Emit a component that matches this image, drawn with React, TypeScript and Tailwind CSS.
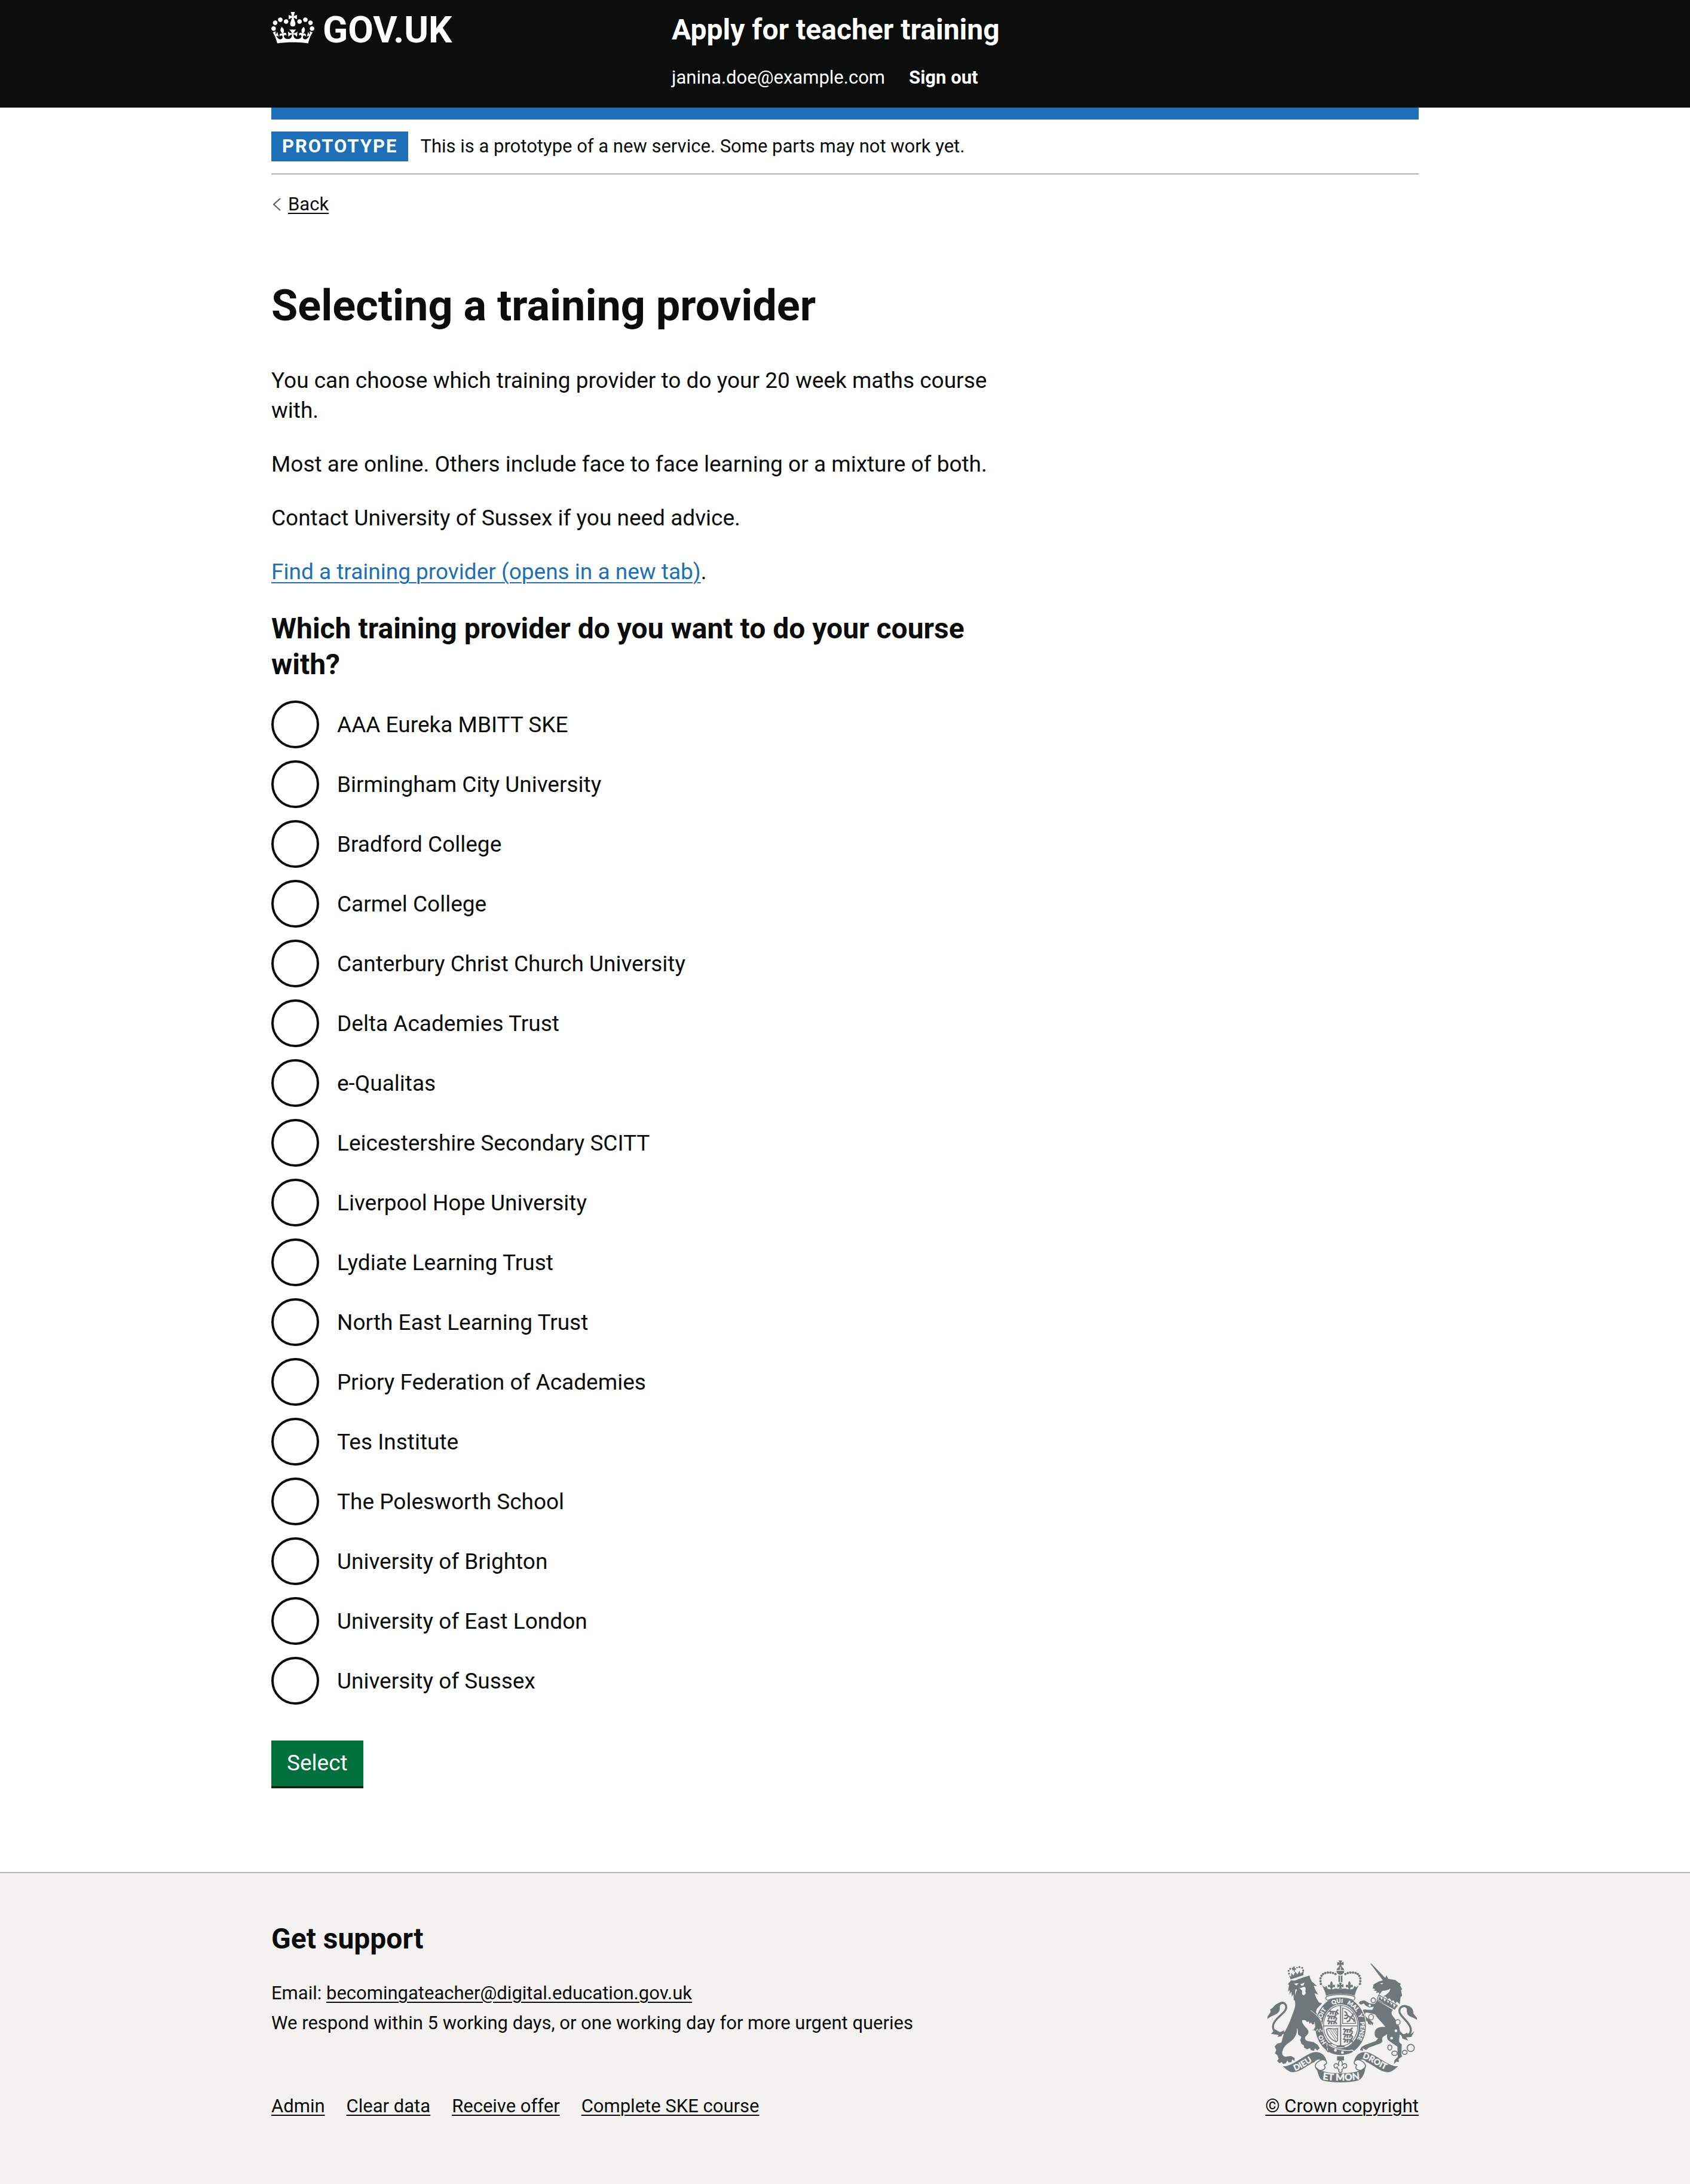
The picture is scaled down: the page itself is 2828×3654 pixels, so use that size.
import React from "react";

const providers = [
  "AAA Eureka MBITT SKE",
  "Birmingham City University",
  "Bradford College",
  "Carmel College",
  "Canterbury Christ Church University",
  "Delta Academies Trust",
  "e-Qualitas",
  "Leicestershire Secondary SCITT",
  "Liverpool Hope University",
  "Lydiate Learning Trust",
  "North East Learning Trust",
  "Priory Federation of Academies",
  "Tes Institute",
  "The Polesworth School",
  "University of Brighton",
  "University of East London",
  "University of Sussex",
];

const footerLinks = ["Admin", "Clear data", "Receive offer", "Complete SKE course"];

const linkBase = "underline decoration-2 underline-offset-4";

function CrownLogo() {
  return (
    <svg aria-hidden="true" viewBox="0 0 132 97" className="h-[53px] w-[72px] fill-current">
      <path
        fillRule="evenodd"
        d="M25 30.2c3.5 1.5 7.7-.2 9.1-3.7 1.5-3.6-.2-7.8-3.9-9.2-3.6-1.4-7.6.3-9.1 3.9-1.4 3.5.3 7.5 3.9 9zM9 39.5c3.6 1.5 7.8-.2 9.2-3.7 1.5-3.6-.2-7.8-3.9-9.1-3.6-1.5-7.6.2-9.1 3.8-1.4 3.5.3 7.5 3.8 9zM4.4 57.2c3.5 1.5 7.7-.2 9.1-3.8 1.5-3.6-.2-7.7-3.9-9.1-3.5-1.5-7.6.3-9.1 3.8-1.4 3.5.3 7.6 3.9 9.1zm38.3-21.4c3.5 1.5 7.7-.2 9.1-3.8 1.5-3.6-.2-7.7-3.9-9.1-3.6-1.5-7.6.3-9.1 3.8-1.3 3.6.4 7.7 3.9 9.1zm64.4-5.6c-3.6 1.5-7.8-.2-9.1-3.7-1.5-3.6.2-7.8 3.8-9.2 3.6-1.4 7.7.3 9.2 3.9 1.3 3.5-.4 7.5-3.9 9zm15.9 9.3c-3.6 1.5-7.7-.2-9.1-3.7-1.5-3.6.2-7.8 3.7-9.1 3.6-1.5 7.7.2 9.2 3.8 1.5 3.5-.3 7.5-3.8 9zm4.7 17.7c-3.6 1.5-7.8-.2-9.2-3.8-1.5-3.6.2-7.7 3.9-9.1 3.6-1.5 7.7.3 9.2 3.8 1.3 3.5-.4 7.6-3.9 9.1zM89.3 35.8c-3.6 1.5-7.8-.2-9.2-3.8-1.4-3.6.2-7.7 3.9-9.1 3.6-1.5 7.7.3 9.2 3.8 1.4 3.6-.3 7.7-3.9 9.1zM69.7 17.7l8.9 4.7V9.3l-8.9 2.8c-.2-.3-.5-.6-.9-.9L72.4 0H59.6l3.5 11.2c-.3.3-.6.5-.9.9l-8.8-2.8v13.1l8.8-4.7c.3.3.6.7.9.9l-5 15.4v.1c-.2.8-.4 1.6-.4 2.4 0 4.1 3.1 7.5 7 8.1h.2c.3 0 .7.1 1 .1.4 0 .7 0 1-.1h.2c4-.6 7.1-4.1 7.1-8.1 0-.8-.1-1.7-.4-2.4V34l-5.1-15.4c.4-.2.7-.6 1-.9zM66 92.8c16.9 0 32.8 1.1 47.1 3.2 4-16.9 8.9-26.7 14-33.5l-9.6-3.4c1 4.9 1.1 7.2 0 10.2-1.5-1.4-3-4.3-4.2-8.7L108.6 76c2.8-2 5-3.2 7.5-3.3-4.4 9.4-10 11.9-13.6 11.2-4.3-.8-6.3-4.6-5.6-7.9 1-4.7 5.7-5.9 8-.5 4.3-8.7-3-11.4-7.6-8.8 7.1-7.2 7.9-13.5 2.1-21.1-8 6.1-8.1 12.3-4.5 20.8-4.7-5.4-12.1-2.5-9.5 6.2 3.4-5.2 7.9-2 7.2 3.1-.6 4.3-6.4 7.8-13.5 7.2-10.3-.9-10.9-8-11.2-13.8 2.5-.5 7.1 1.8 11 7.3L80.2 60c-4.1 4.4-8 5.3-12.3 5.4 1.4-4.4 8-11.6 8-11.6H55.5s6.4 7.2 7.9 11.6c-4.2-.1-8-1-12.3-5.4l1.4 16.4c3.9-5.5 8.5-7.7 10.9-7.3-.3 5.8-.9 12.8-11.1 13.8-7.2.6-12.9-2.9-13.5-7.2-.7-5 3.8-8.3 7.1-3.1 2.7-8.7-4.6-11.6-9.4-6.2 3.7-8.5 3.6-14.7-4.6-20.8-5.8 7.6-5 13.9 2.2 21.1-4.7-2.6-11.9.1-7.7 8.8 2.3-5.5 7.1-4.2 8.1.5.7 3.3-1.3 7.1-5.7 7.9-3.5.7-9-1.8-13.5-11.2 2.5.1 4.7 1.3 7.5 3.3l-4.7-15.4c-1.2 4.4-2.7 7.2-4.3 8.7-1.1-3-.9-5.3 0-10.2l-9.5 3.4c5 6.9 9.9 16.7 14 33.5 14.8-2.1 30.8-3.2 47.7-3.2z"
      />
    </svg>
  );
}

const INK = "#6f777a";
const PAPER = "#f3f2f1";

const beads: [number, number][] = [
  [382, 208], [380, 194], [380, 180], [385, 167], [393, 158], [404, 153], [417, 151], [430, 151], [443, 153], [455, 158],
];

// Words round the garter, each with its distance along the ellipse.
const garterWords: [string, number][] = [
  ["HO", 82],
  ["SOIT", 194],
  ["QUI", 298],
  ["MAL", 373],
  ["Y", 452],
  ["PENSE", 490],
];

function FleurDeLis({ x, y, s }: { x: number; y: number; s: number }) {
  return (
    <path
      transform={`translate(${x} ${y}) scale(${s})`}
      d="M0-24C8-14 9-6 4 4 8-4 18-6 20 4 21 12 12 15 10 9 8 12 7 16 4 18L6 26H-6L-4 18C-7 16-8 12-10 9-12 15-21 12-20 4-18-6-8-4-4 4-9-6-8-14 0-24Z"
    />
  );
}

function CrossPatty({ x, y, s }: { x: number; y: number; s: number }) {
  return (
    <path
      transform={`translate(${x} ${y}) scale(${s})`}
      d="M-9-16H9L3-4 16-9V9L3 4 9 16H-9L-3 4-16 9V-9L-3-4Z"
    />
  );
}

function PassantLion({ x, y }: { x: number; y: number }) {
  return (
    <path
      transform={`translate(${x} ${y})`}
      fill="none"
      strokeWidth="7"
      d="M0 2 5-3 10 1 8 5M8 3C18 0 26 0 38 3L42-5 48-7M12 4 8 13 3 13M20 4 22 13 17 14M36 4 34 13 29 13M40 4 46 12 42 14"
    />
  );
}

function RibbonHalf() {
  return (
    <g>
      <path d="M190 621C236 624 288 572 334 554C372 541 404 558 412 600C404 594 394 590 384 591C371 583 358 590 350 600C318 612 282 650 242 651C220 650 206 634 190 621Z" />
      <path
        d="M389 588C359 598 348 616 357 630C363 639 371 643 379 642C402 641 408 628 398 616C402 612 412 612 411 601C407 592 398 588 389 588Z"
        fill={PAPER}
        stroke={INK}
        strokeWidth="5"
      />
    </g>
  );
}

function RoyalArms() {
  return (
    <svg aria-hidden="true" viewBox="114 90 750 612" className="h-[204px] w-[250px]" fill={INK}>
      {/* Lion */}
      <path d="M232 190 250 191 296 174 325 166 329 181 336 195 363 219 346 217 354 238 369 262 350 254 358 277 372 300 388 305 362 332 357 350 372 370 384 398 393 430 388 446 378 432 375 448 364 432 356 446 340 440 352 424 350 408 340 412 332 401 324 408 322 396 311 399 C308 388 300 388 288 390 C284 400 298 418 310 430 C325 446 322 458 305 472 C298 484 306 494 322 496 L346 500 366 514 376 530 364 542 352 530 348 543 332 541 328 530 312 536 298 528 296 516 284 508 278 490 284 474 268 462 C266 450 268 438 262 430 C264 462 248 484 226 500 C206 512 196 524 190 542 C184 556 190 572 206 573 L232 569 250 580 250 596 238 586 234 600 220 602 214 592 206 606 192 610 186 600 174 606 162 594 170 584 164 566 151 556 158 540 150 522 162 508 184 502 C190 480 192 462 206 438 C222 412 230 384 242 354 C254 324 256 308 250 288 L246 292 244 258 236 272 234 246 224 262 226 238 217 246 222 214 217 208Z" />
      <g fill={PAPER}>
        <path d="M246 206 270 204 260 216ZM278 210 300 201 294 216 284 217Z" />
        <path d="M272 226C282 234 296 216 304 226C308 236 302 240 306 252C304 262 296 268 290 262C284 256 290 246 286 240Z" />
        <path d="M254 234 262 236 252 266Z" />
      </g>
      <circle cx="222" cy="156" r="5" />
      <circle cx="220" cy="142" r="5" />
      <circle cx="228" cy="132" r="5" />
      <circle cx="240" cy="130" r="4" />
      <circle cx="262" cy="126" r="4" />
      <circle cx="274" cy="123" r="5" />
      <circle cx="288" cy="127" r="5" />
      <circle cx="293" cy="140" r="5" />
      <path d="M222 164 232 172 234 152 244 166 254 146 264 160 274 142 280 156 296 142 294 164 230 185Z" />
      <path d="M241 122 252 120 249 130 256 128 257 138 250 136 252 146 246 146 246 137 240 140 238 131 244 131Z" />
      <path
        d="M206 452C166 462 134 446 143 412C152 374 210 356 208 322C206 304 190 298 176 306"
        fill="none"
        stroke={INK}
        strokeWidth="10"
      />
      <path d="M204 302C188 292 156 304 140 328L127 336 130 348 114 372V384C132 366 160 366 172 346C180 332 170 318 184 310Z" />
      <path d="M132 458 152 436 176 450 200 440 184 470 164 474 170 464Z" />

      {/* Unicorn */}
      <path d="M630 105 636 106 711 184 696 194Z" />
      <path d="M642 230 647 210 672 196 698 188 712 164 720 182 756 188 770 200 783 206 780 216 790 234 784 240 790 268 782 274 778 310 764 296 756 306 746 290 736 294 728 280 716 284 708 272 694 270 C712 262 732 246 730 230 C722 238 704 242 690 242 L676 262 672 250 660 254 662 244 646 240 656 234Z" />
      <path d="M678 206 694 202 690 210Z" fill={PAPER} />
      <path d="M672 263 766 316 752 334 664 288Z" fill={PAPER} stroke={INK} strokeWidth="4" />
      <path d="M670 286 678 268 686 288 694 276 702 296 711 284 718 304 728 292 734 314 744 302 748 330 756 314 764 318 750 336Z" />
      <path d="M664 290 744 338C730 352 738 366 752 380C764 398 776 416 778 440C780 470 772 480 776 500L788 512 786 560 790 572 772 584 774 600 762 598 748 610 752 590 768 574 766 522C750 512 736 502 722 492C712 484 714 470 714 460C704 470 688 470 690 486C694 502 680 508 664 512L622 528 608 540 592 530 594 544 578 540 586 524 604 514 658 494 670 480C652 478 650 460 653 446C660 424 684 422 706 424C694 404 668 386 656 362C638 356 616 352 608 352C598 360 606 376 626 386L646 404 640 416 632 402 634 414 620 408 616 396C604 394 588 374 584 346L598 336 640 338 648 322C630 328 606 322 598 306L582 312 572 304 580 294 600 290 628 306 652 308Z" />
      <path
        d="M774 452C804 478 838 466 833 432C828 396 776 372 776 344C776 322 796 314 816 322"
        fill="none"
        stroke={INK}
        strokeWidth="10"
      />
      <path d="M800 319C830 312 848 332 846 356L864 378V388C842 370 818 376 814 350C812 340 816 332 808 328Z" />
      <path d="M776 440 796 462 816 452 818 468 838 456 852 444 836 474 810 476 820 492 792 482Z" />
      <g fill="none" stroke={INK} strokeWidth="5">
        <ellipse cx="645" cy="290" rx="11" ry="12" />
        <ellipse cx="728" cy="527" rx="10" ry="13" />
        <ellipse cx="752" cy="556" rx="14" ry="11" />
        <ellipse cx="803" cy="551" rx="12" ry="10" />
        <circle cx="833" cy="529" r="18" />
      </g>
      <g fill={PAPER} stroke={INK} strokeWidth="4">
        <circle cx="627" cy="316" r="8" />
        <ellipse cx="634" cy="374" rx="12" ry="14" />
        <ellipse cx="768" cy="400" rx="12" ry="13" />
        <circle cx="759" cy="443" r="9" />
        <circle cx="737" cy="480" r="9" />
      </g>

      {/* Crown */}
      <CrossPatty x={480} y={106} s={1} />
      <path d="M461 138C463 126 472 122 478 122V138ZM482 122C490 122 497 128 499 138H482ZM460 142H500C500 154 490 162 480 162S460 154 460 142Z" />
      <path d="M470 166H478V198H470ZM482 166H490V198H482Z" />
      {beads.map(([x, y]) => (
        <g key={`${x}-${y}`}>
          <circle cx={x} cy={y} r="6" />
          <circle cx={960 - x} cy={y} r="6" />
        </g>
      ))}
      <FleurDeLis x={435} y={214} s={0.9} />
      <FleurDeLis x={525} y={214} s={0.9} />
      <CrossPatty x={480} y={217} s={0.95} />
      <path d="M388 214 400 224 410 218 416 232 435 236 456 230 480 234 504 230 525 236 544 232 550 218 560 224 572 214C564 234 556 246 552 266C510 254 450 254 408 266C404 246 396 234 388 214Z" />

      {/* Garter */}
      <ellipse cx="481" cy="420" rx="131" ry="152" fill={PAPER} />
      <ellipse cx="481" cy="420" rx="109" ry="128" fill="none" stroke={INK} strokeWidth="36" />
      <path
        d="M410 270C450 258 510 258 550 270C556 278 552 288 544 290C510 274 450 274 416 290C408 288 404 278 410 270Z"
        fill={PAPER}
        stroke={INK}
        strokeWidth="4"
      />

      {/* Shield */}
      <ellipse cx="481" cy="418" rx="86" ry="102" fill={PAPER} stroke={INK} strokeWidth="4" />
      <path d="M478 316H484V520H478ZM395 416H567V421H395Z" />
      <g stroke={INK}>
        <PassantLion x={422} y={345} />
        <PassantLion x={414} y={369} />
        <PassantLion x={414} y={394} />
        <PassantLion x={494} y={436} />
        <PassantLion x={494} y={461} />
        <PassantLion x={494} y={486} />
      </g>
      <path d="M491 328C525 334 553 364 556 406H491Z" fill="none" stroke={INK} strokeWidth="4" />
      <path
        d="M500 346 510 352 514 364 530 376 542 366 544 356M514 364 500 366M520 370 510 382 498 380M530 376 526 392 512 398M534 378 546 386 550 398"
        fill="none"
        stroke={INK}
        strokeWidth="7"
      />
      <path
        d="M410 436C424 424 440 440 466 432V490C462 500 456 500 452 494C430 486 412 462 410 436Z"
        fill="none"
        stroke={INK}
        strokeWidth="5"
      />
      <path d="M420 438 458 494M430 436 462 484M442 437 464 468M452 438 464 454" stroke={INK} strokeWidth="3" />
      <path d="M466 516H496L504 526H458Z" />

      {/* Buckle and strap */}
      <path d="M412 506C440 528 480 548 540 540L548 548C510 574 450 572 416 548Z" stroke={PAPER} strokeWidth="4" />
      <path d="M438 510C420 500 414 512 418 522C406 528 408 544 422 550" fill="none" stroke={INK} strokeWidth="5" />
      <circle cx="455" cy="541" r="7" fill={PAPER} />
      <circle cx="490" cy="552" r="7" fill={PAPER} />

      {/* Garter lettering */}
      <path id="garter" d="M481 537A100 117 0 0 1 481 303A100 117 0 0 1 481 537" fill="none" />
      <g fill={PAPER} stroke={PAPER} strokeWidth="1" fontFamily="Lato, sans-serif" fontWeight="900" fontSize="29">
        {garterWords.map(([word, offset]) => (
          <text key={word}>
            <textPath href="#garter" startOffset={offset}>
              {word}
            </textPath>
          </text>
        ))}
      </g>

      {/* Forepaws resting on the garter */}
      <path
        d="M330 340C350 356 374 372 384 398L394 432 388 448 378 432 374 450 364 434 356 446 344 440 352 424 350 400"
        stroke={PAPER}
        strokeWidth="3"
      />

      {/* Motto ribbon */}
      <RibbonHalf />
      <g transform="translate(960 0) scale(-1 1)">
        <RibbonHalf />
      </g>
      <path d="M354 618C366 640 400 656 480 656S594 640 606 618C604 656 592 682 570 692C520 705 440 705 390 692C368 682 370 650 354 618Z" />
      <path d="M463 571H498V592H463Z" />
      <path
        d="M480 588C494 602 490 612 487 620C492 606 510 602 512 618C512 630 500 634 496 626C494 634 492 636 487 638C492 646 486 652 480 652S468 646 473 638C468 636 466 634 464 626C460 634 448 630 448 618C450 602 468 606 473 620C470 612 466 602 480 588Z"
        fill={PAPER}
        stroke={INK}
        strokeWidth="5"
      />
      <path id="motto-left" d="M252 644C292 632 326 600 366 582" fill="none" />
      <path id="motto-centre" d="M390 687C440 695 520 695 576 687" fill="none" />
      <path id="motto-right" d="M589 580C630 588 670 630 730 646" fill="none" />
      <g fill={PAPER} stroke={PAPER} strokeWidth="1" fontFamily="Lato, sans-serif" fontWeight="900" fontSize="42">
        <text>
          <textPath href="#motto-left">DIEU</textPath>
        </text>
        <text fontSize="48">
          <textPath href="#motto-centre">ET MON</textPath>
        </text>
        <text>
          <textPath href="#motto-right">DROIT</textPath>
        </text>
      </g>
    </svg>
  );
}

export default function App() {
  const [selected, setSelected] = React.useState<string | null>(null);

  return (
    <div className="bg-white font-['Roboto',sans-serif] text-[37px] leading-[50px] text-[#0b0c0c]">
      <header className="bg-[#0b0c0c] text-white">
        <div className="mx-auto flex max-w-[1920px] items-start pt-5 pb-[30px]">
          <div className="w-[670px] shrink-0">
            <a href="#" className="inline-flex items-start gap-3.5 text-[62px] leading-[60px] font-bold">
              <CrownLogo />
              <span>GOV.UK</span>
            </a>
          </div>
          <div className="flex flex-col gap-[30px]">
            <a href="#" className="text-5xl leading-[60px] font-bold">
              Apply for teacher training
            </a>
            <nav className="flex gap-10 text-[31px] leading-10">
              <span>janina.doe@example.com</span>
              <a href="#" className="font-bold">
                Sign out
              </a>
            </nav>
          </div>
        </div>
      </header>

      <div className="mx-auto max-w-[1920px]">
        <div className="h-5 bg-[#1d70b8]" />
        <div className="flex items-center gap-5 border-b-2 border-[#b1b4b6] py-5 text-[31px] leading-[50px]">
          <strong className="bg-[#1d70b8] px-[18px] tracking-[2px] text-white">PROTOTYPE</strong>
          <span>This is a prototype of a new service. Some parts may not work yet.</span>
        </div>

        <a href="#" className="mt-[30px] flex w-fit items-center gap-3 text-[31px] leading-10">
          <svg aria-hidden="true" viewBox="0 0 16 24" className="h-6 w-4" fill="none" stroke="#505a5f" strokeWidth="2">
            <path d="M15 2 4 12 15 22" />
          </svg>
          <span className={linkBase}>Back</span>
        </a>

        <main className="w-[1240px] max-w-full pt-[110px] pb-[140px]">
          <h1 className="mb-[60px] text-7xl leading-[80px] font-bold">Selecting a training provider</h1>
          <p className="mb-10">You can choose which training provider to do your 20 week maths course with.</p>
          <p className="mb-10">Most are online. Others include face to face learning or a mixture of both.</p>
          <p className="mb-10">Contact University of Sussex if you need advice.</p>
          <p className="mb-10">
            <a href="#" className="text-[#1d70b8] underline decoration-2 underline-offset-[5px]">
              Find a training provider (opens in a new tab)
            </a>
            .
          </p>

          <form onSubmit={(e) => e.preventDefault()}>
            <fieldset>
              <legend className="mb-[30px] text-5xl leading-[60px] font-bold">
                Which training provider do you want to do your course with?
              </legend>
              <div className="flex flex-col gap-5">
                {providers.map((name, i) => (
                  <div key={name} className="flex items-start gap-[30px]">
                    <input
                      type="radio"
                      id={`provider-${i}`}
                      name="provider"
                      value={name}
                      checked={selected === name}
                      onChange={() => setSelected(name)}
                      className="size-20 shrink-0 appearance-none rounded-full border-4 border-[#0b0c0c] bg-white checked:bg-[#0b0c0c] checked:shadow-[inset_0_0_0_14px_white]"
                    />
                    <label htmlFor={`provider-${i}`} className="pt-4">
                      {name}
                    </label>
                  </div>
                ))}
              </div>
            </fieldset>
            <button
              type="submit"
              className="mt-[60px] mb-1 block bg-[#00703c] px-[26px] py-[13px] text-white shadow-[0_4px_0_#002d18]"
            >
              Select
            </button>
          </form>
        </main>
      </div>

      <footer className="border-t-2 border-[#b1b4b6] bg-[#f3f2f1] text-[31px]">
        <div className="mx-auto flex max-w-[1920px] items-end justify-between pt-20 pb-[110px]">
          <div>
            <h2 className="mb-9 text-5xl leading-[60px] font-bold">Get support</h2>
            <ul className="mb-[94px]">
              <li>
                Email:{" "}
                <a href="#" className={linkBase}>
                  becomingateacher@digital.education.gov.uk
                </a>
              </li>
              <li>We respond within 5 working days, or one working day for more urgent queries</li>
            </ul>
            <ul className="flex gap-9 leading-10">
              {footerLinks.map((text) => (
                <li key={text}>
                  <a href="#" className={linkBase}>
                    {text}
                  </a>
                </li>
              ))}
            </ul>
          </div>
          <a href="#" className="flex flex-col items-center gap-5 leading-10">
            <RoyalArms />
            <span className={linkBase}>© Crown copyright</span>
          </a>
        </div>
      </footer>
    </div>
  );
}
